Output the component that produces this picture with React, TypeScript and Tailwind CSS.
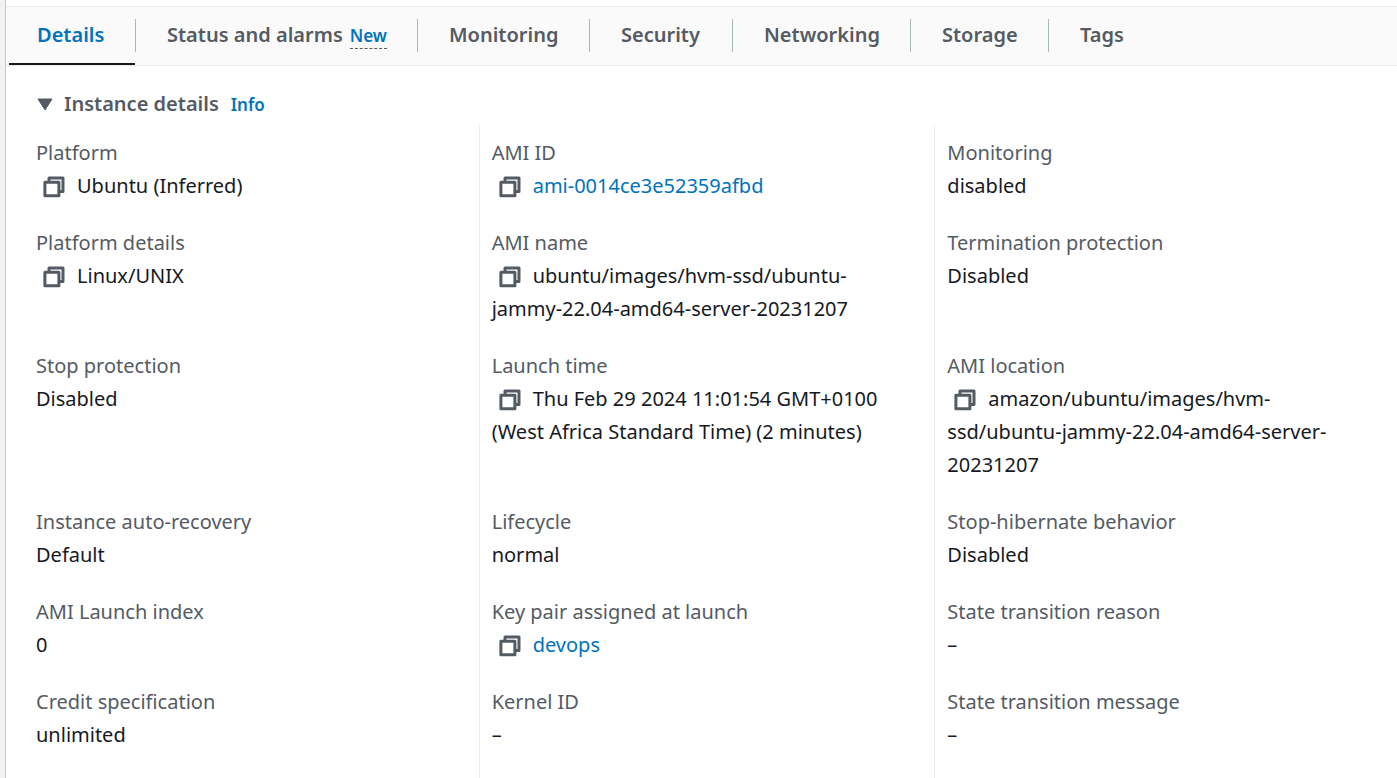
import { useState } from "react";
import clsx from "clsx";

type Field = { label: string; value: string; copy?: boolean; link?: boolean };

const tabs = [
  { name: "Details", width: "w-[127px] pl-7 pr-[30px]" },
  { name: "Status and alarms", badge: "New", width: "w-[282px] px-[31px]" },
  { name: "Monitoring", width: "w-[172px] px-[31px]" },
  { name: "Security", width: "w-[143px] px-[31px]" },
  { name: "Networking", width: "w-[178px] px-[31px]" },
  { name: "Storage", width: "w-[138px] px-[31px]" },
  { name: "Tags", width: "px-[31px]" },
];

const fields: Field[] = [
  { label: "Platform", value: "Ubuntu (Inferred)", copy: true },
  { label: "AMI ID", value: "ami-0014ce3e52359afbd", copy: true, link: true },
  { label: "Monitoring", value: "disabled" },
  { label: "Platform details", value: "Linux/UNIX", copy: true },
  { label: "AMI name", value: "ubuntu/images/hvm-ssd/ubuntu-\njammy-22.04-amd64-server-20231207", copy: true },
  { label: "Termination protection", value: "Disabled" },
  { label: "Stop protection", value: "Disabled" },
  { label: "Launch time", value: "Thu Feb 29 2024 11:01:54 GMT+0100\n(West Africa Standard Time) (2 minutes)", copy: true },
  { label: "AMI location", value: "amazon/ubuntu/images/hvm-\nssd/ubuntu-jammy-22.04-amd64-server-\n20231207", copy: true },
  { label: "Instance auto-recovery", value: "Default" },
  { label: "Lifecycle", value: "normal" },
  { label: "Stop-hibernate behavior", value: "Disabled" },
  { label: "AMI Launch index", value: "0" },
  { label: "Key pair assigned at launch", value: "devops", copy: true, link: true },
  { label: "State transition reason", value: "–" },
  { label: "Credit specification", value: "unlimited" },
  { label: "Kernel ID", value: "–" },
  { label: "State transition message", value: "–" },
];

function CopyButton({ label }: { label: string }) {
  return (
    <button type="button" aria-label={`Copy ${label}`} className="ml-[7px] mr-3 inline-block align-[-5px] text-[#545b64]">
      <svg width="22" height="22" viewBox="0 0 22 22" fill="none" stroke="currentColor" strokeWidth="3" strokeLinejoin="round" className="block">
        <path d="M1.9 6.2h14v13.6h-14z" />
        <path d="M6 6V2h14v13.6h-4" />
      </svg>
    </button>
  );
}

function DetailField({ field }: { field: Field }) {
  return (
    <div className="border-l border-[#eaeded] px-3 pt-[11px] pb-[13px] leading-[33px] nth-[3n+1]:border-transparent">
      <dt className="text-[#545b64]">{field.label}</dt>
      <dd className="whitespace-pre-line text-[#16191f]">
        {field.copy && <CopyButton label={field.label} />}
        {field.link ? (
          <a href="#resource" className="text-[#0073bb]">{field.value}</a>
        ) : (
          field.value
        )}
      </dd>
    </div>
  );
}

export default function App() {
  const [active, setActive] = useState("Details");
  const [open, setOpen] = useState(true);

  return (
    <div className="flex min-h-screen bg-[#f2f3f3] pl-[5px] font-['Noto_Sans',sans-serif] text-[20px]">
      <main className="flex flex-1 flex-col border-l border-[#c3c8c8] bg-white pt-[6px]">
        <nav role="tablist" className="flex h-[60px] border-y border-[#eaeded] bg-[#fafafa] pl-[3px]">
          {tabs.map((tab, i) => (
            <div key={tab.name} className={clsx("relative flex shrink-0 items-start whitespace-nowrap", tab.width)}>
              <button
                type="button"
                role="tab"
                aria-selected={active === tab.name}
                onClick={() => setActive(tab.name)}
                className={clsx("mt-3 h-8 leading-8 font-semibold", active === tab.name ? "text-[#0073bb]" : "text-[#545b64]")}
              >
                {tab.name}
              </button>
              {tab.badge && (
                <a href="#new" className="mt-4 ml-[7px] border-b border-dashed border-[#545b64] text-[17px] leading-[25px] font-semibold text-[#0073bb]">
                  {tab.badge}
                </a>
              )}
              {i < tabs.length - 1 && <span className="absolute top-3 right-0 h-[33px] w-px bg-[#aab7b8]" />}
              {active === tab.name && <span className="absolute right-px bottom-0 left-0 h-[2px] bg-[#16191f]" />}
            </div>
          ))}
        </nav>
        <section className="flex flex-1 flex-col pt-[22px] pr-[7px] pl-[17px]">
          <header className="flex h-[37px] items-start pl-[14px] leading-8">
            <button
              type="button"
              aria-expanded={open}
              onClick={() => setOpen(!open)}
              className="flex items-center font-semibold text-[#545b64]"
            >
              <svg width="16" height="13" viewBox="0 0 16 13" className="mr-[11px]" fill="currentColor">
                <path d="M1 1h14L8 12z" stroke="currentColor" strokeLinejoin="round" />
              </svg>
              Instance details
            </button>
            <a href="#info" className="mt-px ml-3 text-[17px] font-semibold text-[#0073bb]">Info</a>
          </header>
          {open && (
            <dl className="grid flex-1 grid-cols-3 grid-rows-[repeat(5,auto)_1fr]">
              {fields.map((field) => (
                <DetailField key={field.label} field={field} />
              ))}
            </dl>
          )}
        </section>
      </main>
    </div>
  );
}
